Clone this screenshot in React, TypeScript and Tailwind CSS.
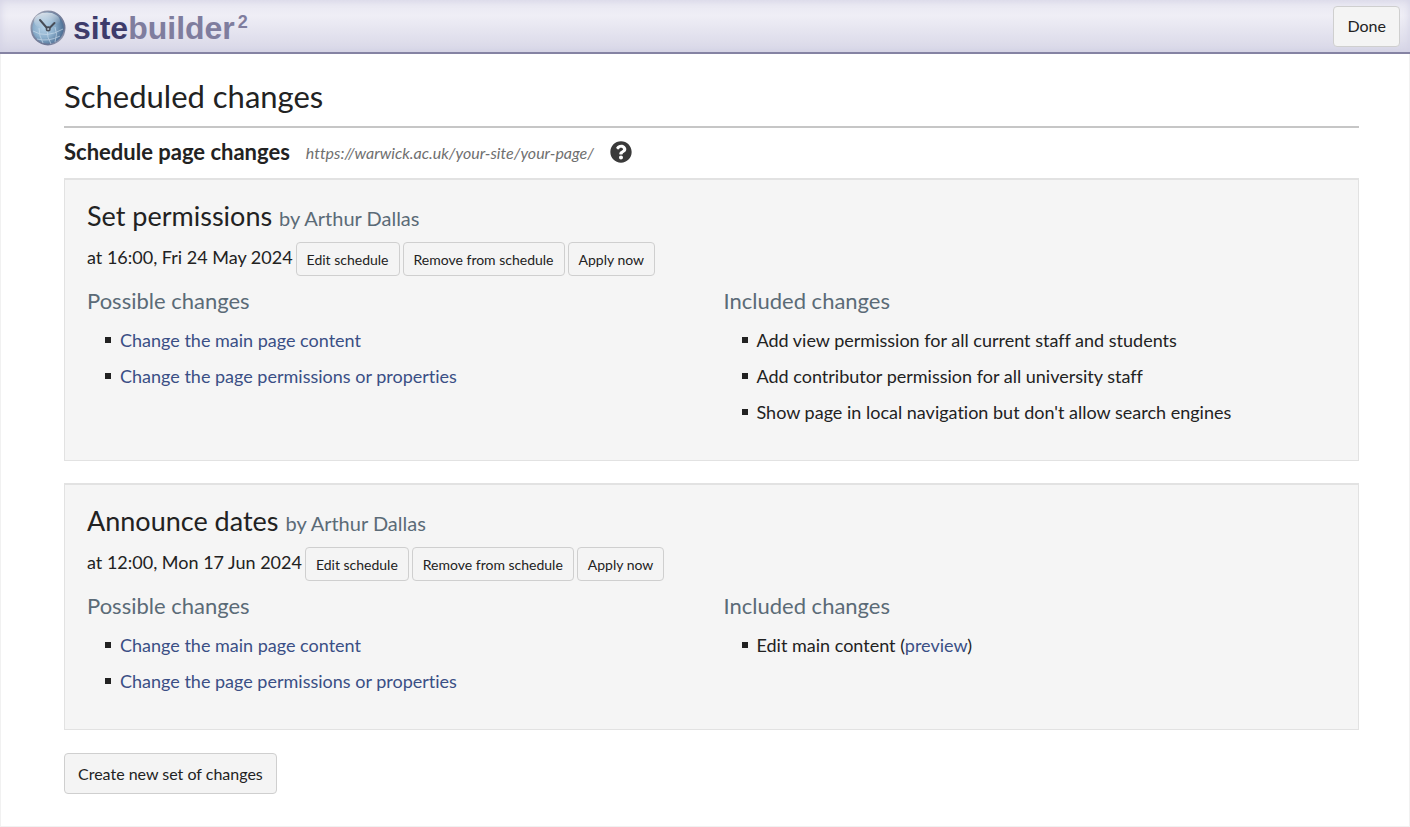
import React from 'react';
import { FaQuestionCircle } from 'react-icons/fa';

interface ChangeSet {
  title: string;
  author: string;
  when: string;
  included: React.ReactNode[];
}

const LINK = 'text-[#3a4f85] hover:underline';

const changeSets: ChangeSet[] = [
  {
    title: 'Set permissions',
    author: 'Arthur Dallas',
    when: 'at 16:00, Fri 24 May 2024',
    included: [
      'Add view permission for all current staff and students',
      'Add contributor permission for all university staff',
      "Show page in local navigation but don't allow search engines",
    ],
  },
  {
    title: 'Announce dates',
    author: 'Arthur Dallas',
    when: 'at 12:00, Mon 17 Jun 2024',
    included: [
      <>
        Edit main content (<a href="#preview" className={LINK}>preview</a>)
      </>,
    ],
  },
];

const possibleChanges = [
  { label: 'Change the main page content', href: '#content' },
  { label: 'Change the page permissions or properties', href: '#properties' },
];

const Logo: React.FC = () => (
  <a href="#home" aria-label="sitebuilder2" className="flex items-center gap-[7px] pt-1">
    <svg viewBox="0 0 36 36" className="size-9">
      <defs>
        <radialGradient id="globe" cx="38%" cy="48%" r="62%">
          <stop offset="0%" stopColor="#b4d0e6" />
          <stop offset="50%" stopColor="#8db0cd" />
          <stop offset="100%" stopColor="#46688f" />
        </radialGradient>
        <linearGradient id="rim" x1="0" y1="0" x2="1" y2="1">
          <stop offset="0%" stopColor="#a9aebc" />
          <stop offset="35%" stopColor="#7d86a0" />
          <stop offset="75%" stopColor="#6b7593" />
          <stop offset="100%" stopColor="#b9bed0" />
        </linearGradient>
        <linearGradient id="shine" x1="0.3" y1="0" x2="0.5" y2="0.8">
          <stop offset="0%" stopColor="#eef2f6" stopOpacity="0.85" />
          <stop offset="100%" stopColor="#eef2f6" stopOpacity="0" />
        </linearGradient>
      </defs>
      <circle cx="18" cy="18" r="16.6" fill="url(#globe)" stroke="url(#rim)" strokeWidth="1.8" />
      <g fill="none" stroke="#cfe0ee" strokeWidth="0.9" opacity="0.7">
        <path d="M3 21 Q16 29 33 19" />
        <path d="M7 29 Q19 32 30 26" />
        <path d="M17 19 Q17 28 21 34" />
        <path d="M25 17 Q28 24 25 32" />
        <path d="M9 18 Q9 26 13 33" />
      </g>
      <ellipse cx="17" cy="11" rx="13" ry="8.5" fill="url(#shine)" />
      <path d="M10 10 L16.5 17.5 L20 17.5 L24.5 13" fill="none" stroke="#474c57" strokeWidth="2" strokeLinecap="round" strokeLinejoin="round" />
      <circle cx="18.2" cy="19" r="1.8" fill="#aebccb" stroke="#474c57" strokeWidth="1.4" />
    </svg>
    <span className="flex font-['Liberation_Sans',sans-serif] text-[32px] leading-9 font-bold text-[#3d3b6b]">
      site<span className="text-[#7f7d9e]">builder</span>
      <sup className="top-0 ml-[3px] self-start text-[18px] leading-6 text-[#7f7d9e]">2</sup>
    </span>
  </a>
);

const Button: React.FC<{ small?: boolean; children: React.ReactNode }> = ({ small, children }) => (
  <button
    type="button"
    className={`rounded border border-[#cfcfcf] bg-[#f4f4f4] text-[#222] hover:bg-[#e8e8e8] ${
      small ? 'h-[34px] px-[10px] text-[14px]' : 'h-[41px] px-[13px] text-[16px]'
    }`}
  >
    {children}
  </button>
);

const ChangeList: React.FC<{ heading: string; items: React.ReactNode[] }> = ({ heading, items }) => (
  <section>
    <h4 className="text-[22px] leading-7 text-[#5b6b77]">{heading}</h4>
    <ul className="mt-[7px]">
      {items.map((item, i) => (
        <li key={i} className="flex items-center gap-[9px] pl-[18px] text-[18px] leading-9">
          <span className="size-[6px] shrink-0 bg-[#222]" />
          <span>{item}</span>
        </li>
      ))}
    </ul>
  </section>
);

const ChangeSetPanel: React.FC<{ set: ChangeSet }> = ({ set }) => (
  <article className="border border-t-2 border-[#e2e2e2] bg-[#f5f5f5] px-[22px] pt-5 pb-[30px]">
    <h3 className="text-[27px] leading-8">
      {set.title} <small className="text-[20px] text-[#5b6b77]">by {set.author}</small>
    </h3>
    <div className="mt-2 flex flex-wrap items-start gap-[3px]">
      <span className="text-[18px] leading-[30px]">{set.when}</span>
      <Button small>Edit schedule</Button>
      <Button small>Remove from schedule</Button>
      <Button small>Apply now</Button>
    </div>
    <div className="mt-[11px] grid grid-cols-2 gap-6">
      <ChangeList
        heading="Possible changes"
        items={possibleChanges.map((c) => (
          <a key={c.href} href={c.href} className={LINK}>{c.label}</a>
        ))}
      />
      <ChangeList heading="Included changes" items={set.included} />
    </div>
  </article>
);

export default function App() {
  return (
    <div className="flex min-h-screen flex-col bg-white font-[Lato,sans-serif] text-[#222] [font-variant-ligatures:none]">
      <header className="flex h-[54px] items-center justify-between border-b-2 border-[#8583a3] bg-linear-to-b from-[#e8e7f1] via-[#efeef6] via-30% to-[#d8d7e7] pr-[10px] pl-[30px] shadow-[inset_0_0_8px_#d2d1e4]">
        <Logo />
        <Button>Done</Button>
      </header>

      <main className="flex-1 border border-t-0 border-[#f1f1f1] pt-[22px] pr-[50px] pl-[63px]">
        <h1 className="border-b-2 border-[#c6c6c6] pb-[10px] text-[31px] leading-10">Scheduled changes</h1>
        <div className="mt-2 flex items-center">
          <h2 className="text-[22px] leading-8 font-bold">Schedule page changes</h2>
          <span className="ml-4 pt-[2px] text-[16px] text-[#6f6f6f] italic">https://warwick.ac.uk/your-site/your-page/</span>
          <button type="button" aria-label="Help" className="ml-4 text-[#3a3a3a]">
            <FaQuestionCircle className="size-[22px]" />
          </button>
        </div>
        <div className="mt-[10px] mb-[23px] flex flex-col gap-[22px]">
          {changeSets.map((set) => (
            <ChangeSetPanel key={set.title} set={set} />
          ))}
        </div>
        <Button>Create new set of changes</Button>
      </main>
    </div>
  );
}
